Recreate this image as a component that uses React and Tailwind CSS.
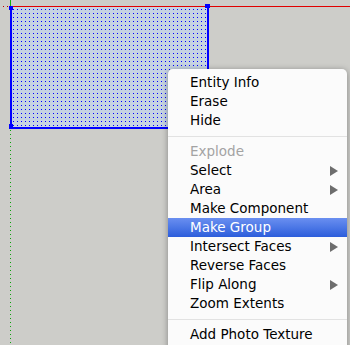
import React from "react";

const items = [
  { t: "Entity Info" },
  { t: "Erase" },
  { t: "Hide" },
  { sep: true },
  { t: "Explode", disabled: true },
  { t: "Select", sub: true },
  { t: "Area", sub: true },
  { t: "Make Component" },
  { t: "Make Group", active: true },
  { t: "Intersect Faces", sub: true },
  { t: "Reverse Faces" },
  { t: "Flip Along", sub: true },
  { t: "Zoom Extents" },
  { sep: true },
  { t: "Add Photo Texture" },
];

function Arrow({ active }) {
  return (
    <svg width="8" height="10" viewBox="0 0 8 10" className="shrink-0">
      <path d="M0 0 L8 5 L0 10 Z" fill={active ? "#ffffff" : "#6d6d6d"} />
    </svg>
  );
}

export default function App() {
  return (
    <div className="relative w-[350px] h-[345px] overflow-hidden bg-[#cdcdc9]">
      <svg className="absolute inset-0" width="350" height="345" viewBox="0 0 350 345">
        <defs>
          <pattern id="dots" x="0" y="0" width="4" height="4" patternUnits="userSpaceOnUse">
            <rect x="1" y="1" width="1" height="1" fill="#0000ff" />
          </pattern>
        </defs>
        {/* green axis */}
        <rect x="10" y="0" width="1" height="7" fill="#10b010" />
        {Array.from({ length: 60 }).map((_, i) => (
          <rect key={i} x="10" y={130 + i * 4} width="1" height="1" fill="#10a010" />
        ))}
        {/* red dotted left */}
        <rect x="3" y="6" width="1" height="1" fill="#c00000" />
        <rect x="7" y="6" width="1" height="1" fill="#c00000" />
        {/* rect fill */}
        <rect x="11" y="7" width="197" height="121" fill="#c6d3e2" />
        <rect x="11" y="7" width="197" height="121" fill="url(#dots)" />
        {/* blue border */}
        <rect x="10" y="7" width="2" height="122" fill="#0000ff" />
        <rect x="207" y="7" width="2" height="122" fill="#0000ff" />
        <rect x="10" y="127" width="199" height="2" fill="#0000ff" />
        {/* red axis */}
        <rect x="11" y="6" width="339" height="1" fill="#e00000" />
        {/* corner handles */}
        <rect x="9" y="6" width="4" height="4" fill="#0000ff" />
        <rect x="205" y="4" width="5" height="4" fill="#0000ff" />
        <rect x="9" y="124" width="4" height="5" fill="#0000ff" />
      </svg>

      <div
        className="absolute left-[168px] top-[69px] w-[179px] h-[290px] bg-[#fbfbfb] rounded-t-[5px] pt-[4px] shadow-[0_1px_6px_rgba(0,0,0,0.35)] text-[13.5px] leading-[19px]"
        style={{ fontFamily: '"DejaVu Sans", sans-serif' }}
      >
        {items.map((it, i) =>
          it.sep ? (
            <div key={i} className="h-[12px] flex items-center">
              <div className="h-px w-full bg-[#e2e2e2]" />
            </div>
          ) : (
            <div
              key={i}
              className={
                "h-[19px] flex items-center justify-between pl-[22px] pr-[9px] " +
                (it.active
                  ? "bg-gradient-to-b from-[#6a8ff0] to-[#2c5ddb] text-white"
                  : it.disabled
                  ? "text-[#a3a3a3]"
                  : "text-black")
              }
            >
              <span className="whitespace-nowrap">{it.t}</span>
              {it.sub && <Arrow active={it.active} />}
            </div>
          )
        )}
      </div>
    </div>
  );
}
